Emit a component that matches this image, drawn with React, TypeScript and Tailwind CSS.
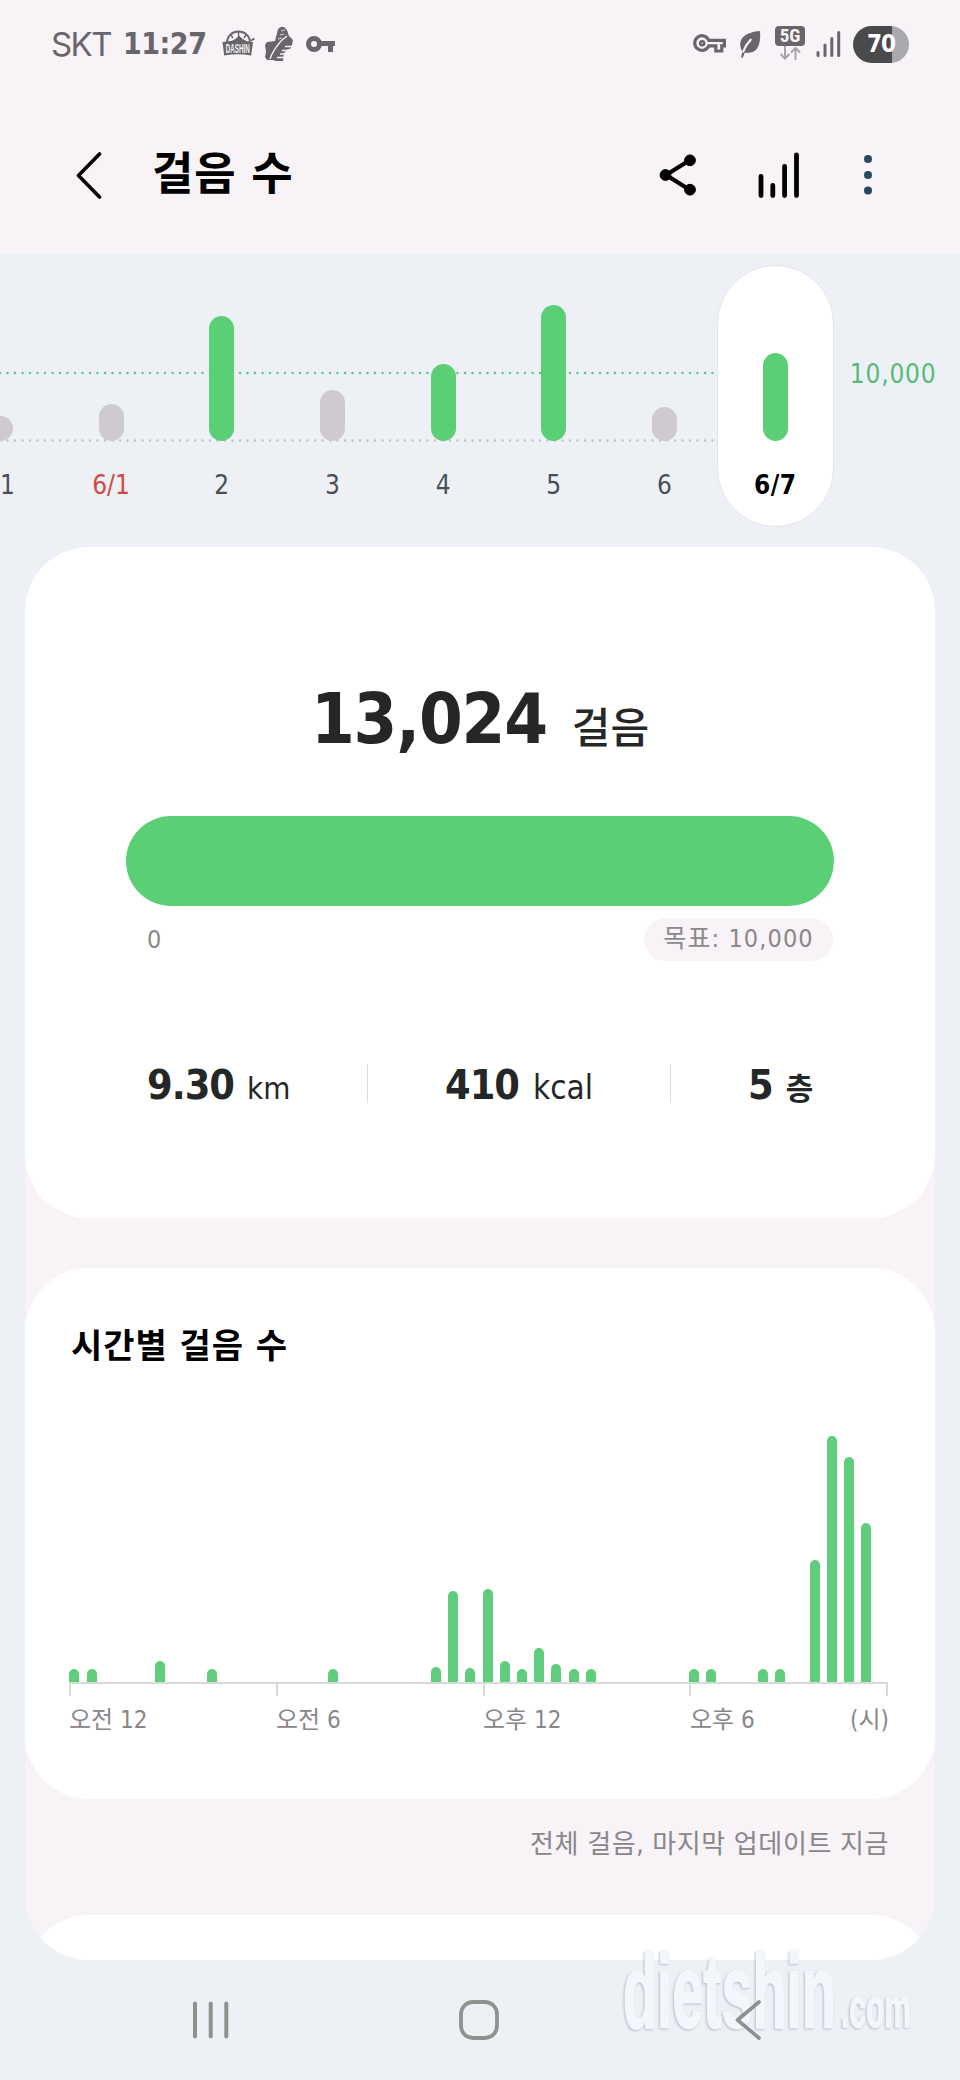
import React from "react";

type Day = { label: string; height: number; met: boolean; tone: string };

const days: Day[] = [
  { label: "1", height: 25, met: false, tone: "pl-[14px] text-[#4a4e55]" },
  { label: "6/1", height: 37, met: false, tone: "text-[#d2483f]" },
  { label: "2", height: 125, met: true, tone: "text-[#4a4e55]" },
  { label: "3", height: 51, met: false, tone: "text-[#4a4e55]" },
  { label: "4", height: 77, met: true, tone: "text-[#4a4e55]" },
  { label: "5", height: 136, met: true, tone: "text-[#4a4e55]" },
  { label: "6", height: 34, met: false, tone: "text-[#4a4e55]" },
];

const halfHours: Record<number, number> = {
  0: 13, 1: 13, 5: 21, 8: 13, 15: 13, 21: 15, 22: 91, 23: 14, 24: 93, 25: 21, 26: 13,
  27: 34, 28: 18, 29: 13, 30: 13, 36: 13, 37: 13, 40: 13, 41: 13, 43: 122, 44: 246, 45: 225, 46: 159,
};

function StatusBar() {
  return (
    <div className="flex h-[88px] items-center pl-[51px] pr-[51px] text-[#69666b]">
      <span className="w-[72px] font-['Inter'] text-[33px] leading-none tracking-[-1.6px]">SKT</span>
      <span className="w-[99px] text-[30px] font-bold leading-[40px] tracking-[-0.5px]">11:27</span>
      <svg className="h-[28px] w-[34px]" viewBox="0 0 34 28" fill="none" stroke="currentColor">
        <path d="M5 12a11.5 10.5 0 0 1 23 0" strokeWidth="1.8" />
        <path d="M16.500 2v4M9 5l2 3M24 5l-2 3" strokeWidth="1.400" />
        <path d="M9 12l5-3 3-3 3 3 5 3z" fill="currentColor" strokeWidth="1" />
        <path d="M0.500 12q16-3 30.500 0l-1.800 13.500q-13.500-2.500-27 0z" fill="currentColor" stroke="none" />
        <path d="M29 10.500l3.500-2" strokeWidth="2" />
        <text x="3.800" y="23.200" fill="#f7f3f7" stroke="none" fontSize="13" fontWeight="700" textLength="24" lengthAdjust="spacingAndGlyphs" fontFamily="Liberation Sans">DASHIN</text>
      </svg>
      <svg className="ml-[9px] h-[36px] w-[30px]" viewBox="0 0 30 36" fill="currentColor">
        <path d="M13 3q3-3 6-2l3 3 2 6 4 4-1 5-9 9-5 6H2l-2-3 1-5-1-7 2-3 8-1z" />
        <path d="M21 20h6l-2 3h-3l-2 3h-1l-1 9H9l4-6z" />
        <path d="M5 33c2-7 6-12 11-18l6-5" fill="none" stroke="#f7f3f7" strokeWidth="1.200" />
        <path d="M20 20.500h7M17 24.500h8M15 28h6M12 31.500h7" fill="none" stroke="#f7f3f7" strokeWidth="1.300" />
        <path d="M15 9l4-1M16 5l4-1M13 13l4-1" stroke="#f7f3f7" strokeWidth="0.800" />
      </svg>
      <svg className="ml-[11px] h-[18px] w-[30px]" viewBox="0 0 30 18" fill="none" stroke="currentColor">
        <circle cx="8" cy="9" r="5.500" strokeWidth="5" />
        <path d="M14 8.500h15M24.500 10v7" strokeWidth="5" />
      </svg>
      <svg className="ml-auto h-[20px] w-[34px]" viewBox="0 0 34 20" fill="none" stroke="currentColor" strokeWidth="3.200">
        <path d="M15.800 6.300H31.400v5.500h-2.600v5.200h-6v-5.200h-7A7.300 7.300 0 1 1 15.800 6.300z" />
        <circle cx="9.200" cy="9.200" r="2" strokeWidth="2.600" />
      </svg>
      <svg className="ml-[12px] h-[28px] w-[22px]" viewBox="0 0 22 28" fill="currentColor">
        <path d="M21 1c.7 9-.3 19-8.500 21.300-3 .7-5.300.6-6.800.2L4 27.500H2l1.300-6C-1.500 13 1 2.500 21 1z" />
        <path d="M4.300 21.500C6 16.500 9 12.500 11.700 9.700" stroke="#f7f3f7" strokeWidth="2.200" strokeLinecap="round" fill="none" />
      </svg>
      <div className="ml-[14px] mt-[-2px] flex w-[30px] flex-col items-center">
        <span className="flex h-[20px] w-[30px] items-center justify-center rounded-[4px] bg-[#69666b] font-['Roboto'] text-[19px] font-bold leading-[20px] text-[#f7f3f7]">5G</span>
        <svg className="h-[14px] w-[22px]" viewBox="0 0 22 14" fill="none" stroke="#a7a5ac" strokeWidth="2">
          <path d="M6 0v12M1.500 8L6 12.500 10.500 8M16.500 14V2M12 6.500L16.500 2 21 6.500" />
        </svg>
      </div>
      <svg className="ml-[11px] h-[26px] w-[25px]" viewBox="0 0 25 26" stroke="currentColor" strokeWidth="3" strokeLinecap="round">
        <path d="M2 24.500V21.500M9 24.500V14M15.800 24.500V7.500M22.700 24.500V1.500" />
      </svg>
      <div className="ml-[12px] flex h-[37px] w-[56px] items-center justify-center rounded-full bg-[linear-gradient(90deg,#4a494c_39px,#a9a8ad_39px)] text-[24px] font-bold leading-[30px] tracking-[-1px] text-white">
        70
      </div>
    </div>
  );
}

function TitleBar() {
  return (
    <div className="flex h-[166px] items-center pl-[76px] pt-[8px]">
      <svg className="h-[48px] w-[26px]" viewBox="0 0 26 48" fill="none" stroke="#000" strokeWidth="3.600" strokeLinecap="round" strokeLinejoin="round">
        <path d="M23.500 3L2.500 24.500 23.500 46" />
      </svg>
      <h1 className="ml-[50px] w-[507px] text-[45px] font-bold leading-[50px] tracking-[0.8px] text-black">걸음 수</h1>
      <svg className="h-[42px] w-[38px]" viewBox="0 0 38 42" fill="#000" stroke="#000">
        <path d="M31 6L7 21 31 36" fill="none" strokeWidth="4.200" />
        <circle cx="31" cy="6.300" r="5.400" />
        <circle cx="6.500" cy="21" r="5.400" />
        <circle cx="31" cy="35.700" r="5.400" />
      </svg>
      <svg className="ml-[61px] h-[48px] w-[44px]" viewBox="0 0 44 48" stroke="#000" strokeWidth="4.800" strokeLinecap="round">
        <path d="M3 44.500V25.500M14.800 44.500V34.500M26.600 44.500V15.500M38.500 44.500V4" />
      </svg>
      <svg className="ml-[61px] h-[42px] w-[10px]" viewBox="0 0 10 42" fill="#274861">
        <circle cx="5" cy="5" r="4" />
        <circle cx="5" cy="21" r="4" />
        <circle cx="5" cy="36.500" r="4" />
      </svg>
    </div>
  );
}

function DailyStrip() {
  return (
    <section className="relative flex h-[293px] text-[26px]">
      <svg className="absolute left-0 top-[117px] h-[72px] w-[717px]" viewBox="0 0 717 72" fill="none" strokeLinecap="round" strokeDasharray="0 7.500">
        <path d="M0 2H716" stroke="#63c58a" strokeWidth="2.600" />
        <path d="M0 69.500H716" stroke="#c3bfc6" strokeWidth="2.400" />
      </svg>
      <div className="relative -ml-[55px] flex">
        {days.map((d) => (
          <div key={d.label + d.height} className="flex w-[110.700px] flex-col items-center">
            <div className="flex h-[187px] items-end">
              <div
                className={d.met ? "w-[25px] rounded-full bg-[#5bcf75]" : "w-[25px] rounded-full bg-[#cfcacf]"}
                style={{ height: d.height }}
              />
            </div>
            <span className={"mt-[29px] leading-[30px] " + d.tone}>{d.label}</span>
          </div>
        ))}
      </div>
      <div className="relative ml-[-3px] mt-[11px] flex h-[262px] w-[117px] flex-col items-center rounded-full border border-[#e3e3ea] bg-white">
        <div className="flex h-[175px] items-end">
          <div className="h-[88px] w-[25px] rounded-full bg-[#5bcf75]" />
        </div>
        <span className="mt-[29px] font-bold leading-[30px] tracking-[0.5px] text-black">6/7</span>
      </div>
      <span className="ml-[16px] mt-[106px] leading-[28px] tracking-[0.800px] text-[#55bb78]">10,000</span>
    </section>
  );
}

function SummaryCard() {
  return (
    <section className="h-[671px] rounded-[64px] bg-white pt-[127px] text-[#252726]">
      <div className="flex h-[90px] items-baseline justify-center">
        <span className="text-[70px] font-bold leading-[90px] tracking-[-1.2px]">13,024</span>
        <span className="ml-[25px] text-[42px] font-medium leading-[50px]">걸음</span>
      </div>
      <div className="mx-[101px] mt-[52px] h-[90px] rounded-full bg-[#5bcf75]" />
      <div className="mx-[102px] mt-[12px] flex items-center justify-between text-[25px] text-[#8b898c]">
        <span className="pl-[20px]">0</span>
        <span className="flex h-[43px] w-[189px] items-center justify-center whitespace-nowrap rounded-full bg-[#f7f3f7] pb-[1px] tracking-[1.1px]">목표: 10,000</span>
      </div>
      <div className="mt-[103px] flex h-[39px] items-center">
        <div className="flex w-[342px] items-baseline pl-[122px] pt-[3px]">
          <b className="text-[41px] leading-[44px] tracking-[-1px]">9.30</b>
          <span className="ml-[13px] text-[31px] font-medium leading-[36px]">km</span>
        </div>
        <div className="h-full w-px bg-[#dcdcdc]" />
        <div className="flex w-[302px] items-baseline justify-center pt-[3px]">
          <b className="text-[41px] leading-[44px] tracking-[-1px]">410</b>
          <span className="ml-[14px] text-[33px] font-medium leading-[36px]">kcal</span>
        </div>
        <div className="h-full w-px bg-[#dcdcdc]" />
        <div className="flex flex-1 items-baseline pl-[77px] pt-[3px]">
          <b className="text-[41px] leading-[44px]">5</b>
          <span className="ml-[12px] text-[30px] font-bold leading-[36px]">층</span>
        </div>
      </div>
    </section>
  );
}

function HourlyCard() {
  return (
    <section className="mt-[50px] h-[531px] rounded-[64px] bg-white pt-[56px]">
      <h2 className="pl-[46px] text-[34px] font-bold leading-[44px] tracking-[1px] text-black">시간별 걸음 수</h2>
      <div className="ml-[40.700px] mt-[68px] flex h-[246px] w-[826.600px] items-end">
        {Array.from({ length: 48 }, (_, i) => (
          <div key={i} className="flex flex-1 justify-center">
            <div className="w-[10px] rounded-t-full bg-[#5fcd7b]" style={{ height: halfHours[i] ?? 0 }} />
          </div>
        ))}
      </div>
      <div className="ml-[44px] flex h-[14px] w-[819px] border-r-2 border-t-2 border-[#d9d9d9]">
        <div className="w-[207px] border-l-2 border-[#d9d9d9]" />
        <div className="w-[207px] border-l-2 border-[#d9d9d9]" />
        <div className="w-[206px] border-l-2 border-[#d9d9d9]" />
        <div className="border-l-2 border-[#d9d9d9]" />
      </div>
      <div className="ml-[44px] mt-[8px] flex w-[820px] text-[24px] leading-[32px] text-[#88868a]">
        <span className="w-[207px]">오전 12</span>
        <span className="w-[207px]">오전 6</span>
        <span className="w-[207px]">오후 12</span>
        <span className="flex-1">오후 6</span>
        <span>(시)</span>
      </div>
    </section>
  );
}

function NavBar() {
  return (
    <nav className="relative flex h-[120px] items-center">
      <svg className="ml-[192px] h-[40px] w-[38px]" viewBox="0 0 38 40" stroke="#8f918f" strokeWidth="4" strokeLinecap="round">
        <path d="M3 3.500V36.500M18.700 3.500V36.500M34.300 3.500V36.500" />
      </svg>
      <svg className="ml-[228px] h-[42px] w-[42px]" viewBox="0 0 42 42" fill="none" stroke="#8f918f" strokeWidth="3.800">
        <rect x="3" y="3" width="36" height="36" rx="12" />
      </svg>
      <div className="absolute left-[622px] top-[-42px]">
        <svg className="h-[140px] w-[300px] drop-shadow-[-1px_1px_1px_rgba(110,115,130,0.400)]" viewBox="0 0 300 140" fill="#f3f6fa" stroke="#f3f6fa" fontFamily="Liberation Sans Narrow, Liberation Sans" fontWeight="700">
          <text x="1" y="109" fontSize="104" strokeWidth="2.500" textLength="213" lengthAdjust="spacingAndGlyphs">dietshin</text>
          <text x="219" y="109" fontSize="56" strokeWidth="1.500" textLength="70" lengthAdjust="spacingAndGlyphs">.com</text>
        </svg>
      </div>
      <svg className="relative ml-[234px] h-[42px] w-[28px]" viewBox="0 0 28 42" fill="none" stroke="#8f918f" strokeWidth="3.600" strokeLinecap="round" strokeLinejoin="round">
        <path d="M25 3L3.500 21 25 39" />
      </svg>
    </nav>
  );
}

export default function App() {
  return (
    <div className="h-[2080px] w-[960px] overflow-hidden bg-[#edf1f6] font-['DejaVu_Sans_Condensed','DejaVu_Sans','Noto_Sans_CJK_KR',sans-serif] [font-stretch:condensed]">
      <header className="bg-[#f7f3f7]">
        <StatusBar />
        <TitleBar />
      </header>
      <DailyStrip />
      <main className="mx-[25px] h-[1413px] overflow-hidden rounded-[64px] bg-[#f7f3f7]">
        <SummaryCard />
        <HourlyCard />
        <p className="mr-[46px] mt-[28px] text-right text-[26px] leading-[34px] tracking-[0.6px] text-[#88868a]">전체 걸음, 마지막 업데이트 지금</p>
        <div className="mt-[54px] h-[200px] rounded-[64px] bg-white" />
      </main>
      <NavBar />
    </div>
  );
}
